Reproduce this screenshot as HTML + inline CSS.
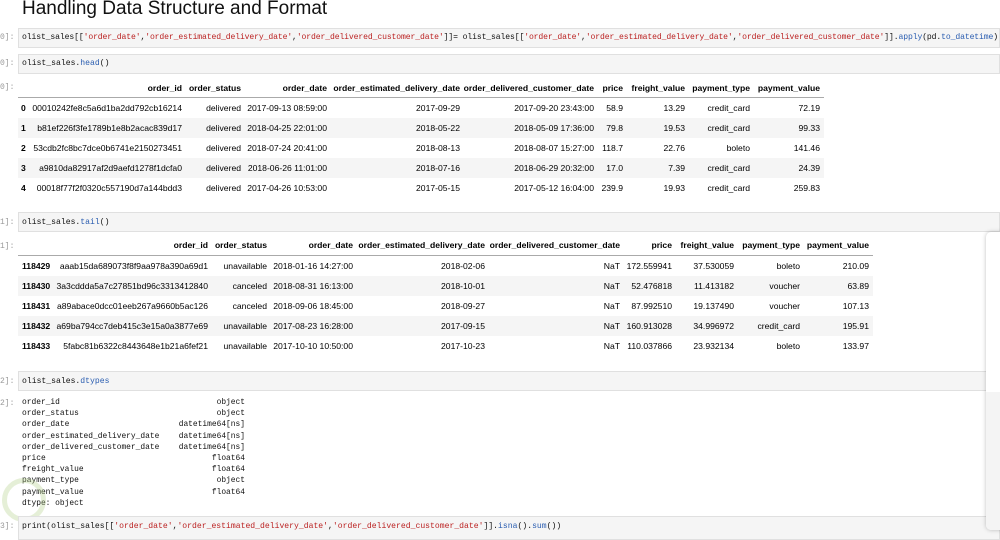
<!DOCTYPE html>
<html><head><meta charset="utf-8"><style>
body{margin:0;width:1000px;height:536px;background:#fff;position:relative;overflow:hidden;font-family:"Liberation Sans",sans-serif;color:#000}
.t{position:absolute;left:22px;top:-2px;font-size:19px;color:#111;white-space:nowrap}
.in{position:absolute;left:18px;right:0;background:#f5f5f5;border:1px solid #e0e0e0;height:18px}
.code{position:absolute;left:22px;font-family:"Liberation Mono",monospace;font-size:8.1px;color:#111;white-space:nowrap}
.p{position:absolute;left:0;font-family:"Liberation Mono",monospace;font-size:8px;color:#9a9a9a}
.s{color:#b22}.f{color:#2a5db0}
.c{position:absolute;font-size:8.6px;white-space:nowrap;text-align:right}
.h{font-weight:bold}
.st{position:absolute;left:18px;height:20px;background:#f5f5f5}
.ln{position:absolute;left:18px;height:1px;background:#aaa}
.dt{position:absolute;font-family:"Liberation Mono",monospace;font-size:7.9px;line-height:11.2px;white-space:pre;color:#111}
</style></head><body>
<div class="t">Handling Data Structure and Format</div>

<div class="in" style="top:28px"></div>
<div class="p" style="top:33px">0]:</div>
<div class="code" style="top:33px;letter-spacing:-0.12px">olist_sales[[<span class="s">'order_date'</span>,<span class="s">'order_estimated_delivery_date'</span>,<span class="s">'order_delivered_customer_date'</span>]]= olist_sales[[<span class="s">'order_date'</span>,<span class="s">'order_estimated_delivery_date'</span>,<span class="s">'order_delivered_customer_date'</span>]].<span class="f">apply</span>(pd.<span class="f">to_datetime</span>)</div>

<div class="in" style="top:54px"></div>
<div class="p" style="top:59px">0]:</div>
<div class="code" style="top:59px">olist_sales.<span class="f">head</span>()</div>
<div class="p" style="top:83px">0]:</div>

<div class="st" style="top:118px;width:806px"></div>
<div class="st" style="top:158px;width:806px"></div>
<div class="ln" style="top:97px;width:806px"></div>

<div class="in" style="top:212px"></div>
<div class="p" style="top:218px">1]:</div>
<div class="code" style="top:218px">olist_sales.<span class="f">tail</span>()</div>
<div class="p" style="top:242px">1]:</div>

<div class="st" style="top:276px;width:855px"></div>
<div class="st" style="top:316px;width:855px"></div>
<div class="ln" style="top:255px;width:855px"></div>

<div class="in" style="top:371px"></div>
<div class="p" style="top:377px">2]:</div>
<div class="code" style="top:377px">olist_sales.<span class="f">dtypes</span></div>
<div class="p" style="top:399px">2]:</div>
<div class="dt" style="top:397px;left:22px">order_id
order_status
order_date
order_estimated_delivery_date
order_delivered_customer_date
price
freight_value
payment_type
payment_value
dtype: object</div>
<div class="dt" style="top:397px;right:755px;text-align:right">object
object
datetime64[ns]
datetime64[ns]
datetime64[ns]
float64
float64
object
float64</div>

<div style="position:absolute;left:2px;top:478px;width:44px;height:44px;border-radius:50%;border:5px solid rgba(180,210,140,.35);box-sizing:border-box"></div>

<div class="in" style="top:516px;height:22px"></div>
<div class="p" style="top:522px">3]:</div>
<div class="code" style="top:522px">print(olist_sales[[<span class="s">'order_date'</span>,<span class="s">'order_estimated_delivery_date'</span>,<span class="s">'order_delivered_customer_date'</span>]].<span class="f">isna</span>().<span class="f">sum</span>())</div>

<div style="position:absolute;left:986px;top:232px;width:20px;height:298px;border-radius:5px;background:#fff;box-shadow:0 0 4px rgba(0,0,0,.25)"></div>
<div style="position:absolute;left:986px;top:392px;width:20px;height:138px;border-radius:0 0 5px 5px;background:#f4f4f4"></div>

<!-- head table -->
<div class="c h" style="right:818px;top:83px">order_id</div>
<div class="c h" style="right:759px;top:83px">order_status</div>
<div class="c h" style="right:673px;top:83px">order_date</div>
<div class="c h" style="right:540px;top:83px">order_estimated_delivery_date</div>
<div class="c h" style="right:406px;top:83px">order_delivered_customer_date</div>
<div class="c h" style="right:377px;top:83px">price</div>
<div class="c h" style="right:315px;top:83px">freight_value</div>
<div class="c h" style="right:250px;top:83px">payment_type</div>
<div class="c h" style="right:180px;top:83px">payment_value</div>

<div class="c h" style="left:21px;top:103px">0</div>
<div class="c" style="right:818px;top:103px">00010242fe8c5a6d1ba2dd792cb16214</div>
<div class="c" style="right:759px;top:103px">delivered</div>
<div class="c" style="right:673px;top:103px">2017-09-13 08:59:00</div>
<div class="c" style="right:540px;top:103px">2017-09-29</div>
<div class="c" style="right:406px;top:103px">2017-09-20 23:43:00</div>
<div class="c" style="right:377px;top:103px">58.9</div>
<div class="c" style="right:315px;top:103px">13.29</div>
<div class="c" style="right:250px;top:103px">credit_card</div>
<div class="c" style="right:180px;top:103px">72.19</div>

<div class="c h" style="left:21px;top:123px">1</div>
<div class="c" style="right:818px;top:123px">b81ef226f3fe1789b1e8b2acac839d17</div>
<div class="c" style="right:759px;top:123px">delivered</div>
<div class="c" style="right:673px;top:123px">2018-04-25 22:01:00</div>
<div class="c" style="right:540px;top:123px">2018-05-22</div>
<div class="c" style="right:406px;top:123px">2018-05-09 17:36:00</div>
<div class="c" style="right:377px;top:123px">79.8</div>
<div class="c" style="right:315px;top:123px">19.53</div>
<div class="c" style="right:250px;top:123px">credit_card</div>
<div class="c" style="right:180px;top:123px">99.33</div>

<div class="c h" style="left:21px;top:143px">2</div>
<div class="c" style="right:818px;top:143px">53cdb2fc8bc7dce0b6741e2150273451</div>
<div class="c" style="right:759px;top:143px">delivered</div>
<div class="c" style="right:673px;top:143px">2018-07-24 20:41:00</div>
<div class="c" style="right:540px;top:143px">2018-08-13</div>
<div class="c" style="right:406px;top:143px">2018-08-07 15:27:00</div>
<div class="c" style="right:377px;top:143px">118.7</div>
<div class="c" style="right:315px;top:143px">22.76</div>
<div class="c" style="right:250px;top:143px">boleto</div>
<div class="c" style="right:180px;top:143px">141.46</div>

<div class="c h" style="left:21px;top:163px">3</div>
<div class="c" style="right:818px;top:163px">a9810da82917af2d9aefd1278f1dcfa0</div>
<div class="c" style="right:759px;top:163px">delivered</div>
<div class="c" style="right:673px;top:163px">2018-06-26 11:01:00</div>
<div class="c" style="right:540px;top:163px">2018-07-16</div>
<div class="c" style="right:406px;top:163px">2018-06-29 20:32:00</div>
<div class="c" style="right:377px;top:163px">17.0</div>
<div class="c" style="right:315px;top:163px">7.39</div>
<div class="c" style="right:250px;top:163px">credit_card</div>
<div class="c" style="right:180px;top:163px">24.39</div>

<div class="c h" style="left:21px;top:183px">4</div>
<div class="c" style="right:818px;top:183px">00018f77f2f0320c557190d7a144bdd3</div>
<div class="c" style="right:759px;top:183px">delivered</div>
<div class="c" style="right:673px;top:183px">2017-04-26 10:53:00</div>
<div class="c" style="right:540px;top:183px">2017-05-15</div>
<div class="c" style="right:406px;top:183px">2017-05-12 16:04:00</div>
<div class="c" style="right:377px;top:183px">239.9</div>
<div class="c" style="right:315px;top:183px">19.93</div>
<div class="c" style="right:250px;top:183px">credit_card</div>
<div class="c" style="right:180px;top:183px">259.83</div>

<!-- tail table -->
<div class="c h" style="right:792px;top:240px">order_id</div>
<div class="c h" style="right:733px;top:240px">order_status</div>
<div class="c h" style="right:647px;top:240px">order_date</div>
<div class="c h" style="right:515px;top:240px">order_estimated_delivery_date</div>
<div class="c h" style="right:380px;top:240px">order_delivered_customer_date</div>
<div class="c h" style="right:328px;top:240px">price</div>
<div class="c h" style="right:266px;top:240px">freight_value</div>
<div class="c h" style="right:200px;top:240px">payment_type</div>
<div class="c h" style="right:131px;top:240px">payment_value</div>

<div class="c h" style="left:22px;top:261px">118429</div>
<div class="c" style="right:792px;top:261px">aaab15da689073f8f9aa978a390a69d1</div>
<div class="c" style="right:733px;top:261px">unavailable</div>
<div class="c" style="right:647px;top:261px">2018-01-16 14:27:00</div>
<div class="c" style="right:515px;top:261px">2018-02-06</div>
<div class="c" style="right:380px;top:261px">NaT</div>
<div class="c" style="right:328px;top:261px">172.559941</div>
<div class="c" style="right:266px;top:261px">37.530059</div>
<div class="c" style="right:200px;top:261px">boleto</div>
<div class="c" style="right:131px;top:261px">210.09</div>

<div class="c h" style="left:22px;top:281px">118430</div>
<div class="c" style="right:792px;top:281px">3a3cddda5a7c27851bd96c3313412840</div>
<div class="c" style="right:733px;top:281px">canceled</div>
<div class="c" style="right:647px;top:281px">2018-08-31 16:13:00</div>
<div class="c" style="right:515px;top:281px">2018-10-01</div>
<div class="c" style="right:380px;top:281px">NaT</div>
<div class="c" style="right:328px;top:281px">52.476818</div>
<div class="c" style="right:266px;top:281px">11.413182</div>
<div class="c" style="right:200px;top:281px">voucher</div>
<div class="c" style="right:131px;top:281px">63.89</div>

<div class="c h" style="left:22px;top:301px">118431</div>
<div class="c" style="right:792px;top:301px">a89abace0dcc01eeb267a9660b5ac126</div>
<div class="c" style="right:733px;top:301px">canceled</div>
<div class="c" style="right:647px;top:301px">2018-09-06 18:45:00</div>
<div class="c" style="right:515px;top:301px">2018-09-27</div>
<div class="c" style="right:380px;top:301px">NaT</div>
<div class="c" style="right:328px;top:301px">87.992510</div>
<div class="c" style="right:266px;top:301px">19.137490</div>
<div class="c" style="right:200px;top:301px">voucher</div>
<div class="c" style="right:131px;top:301px">107.13</div>

<div class="c h" style="left:22px;top:321px">118432</div>
<div class="c" style="right:792px;top:321px">a69ba794cc7deb415c3e15a0a3877e69</div>
<div class="c" style="right:733px;top:321px">unavailable</div>
<div class="c" style="right:647px;top:321px">2017-08-23 16:28:00</div>
<div class="c" style="right:515px;top:321px">2017-09-15</div>
<div class="c" style="right:380px;top:321px">NaT</div>
<div class="c" style="right:328px;top:321px">160.913028</div>
<div class="c" style="right:266px;top:321px">34.996972</div>
<div class="c" style="right:200px;top:321px">credit_card</div>
<div class="c" style="right:131px;top:321px">195.91</div>

<div class="c h" style="left:22px;top:341px">118433</div>
<div class="c" style="right:792px;top:341px">5fabc81b6322c8443648e1b21a6fef21</div>
<div class="c" style="right:733px;top:341px">unavailable</div>
<div class="c" style="right:647px;top:341px">2017-10-10 10:50:00</div>
<div class="c" style="right:515px;top:341px">2017-10-23</div>
<div class="c" style="right:380px;top:341px">NaT</div>
<div class="c" style="right:328px;top:341px">110.037866</div>
<div class="c" style="right:266px;top:341px">23.932134</div>
<div class="c" style="right:200px;top:341px">boleto</div>
<div class="c" style="right:131px;top:341px">133.97</div>
</body></html>
